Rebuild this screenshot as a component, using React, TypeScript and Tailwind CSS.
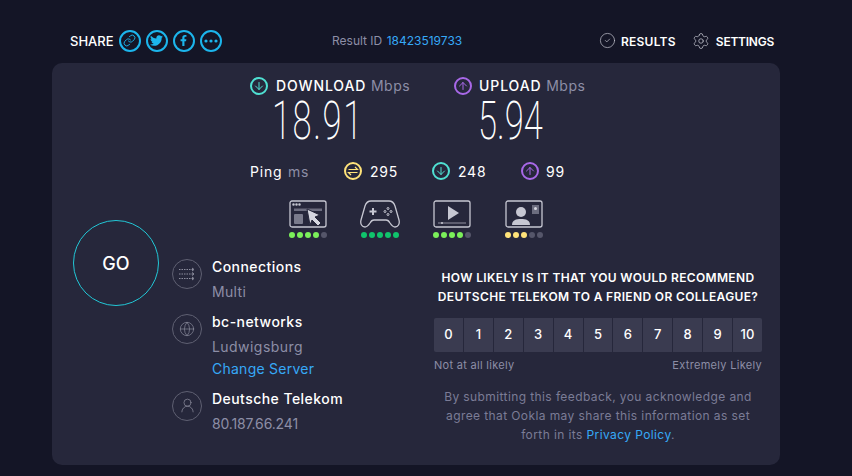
import React from "react";
import { ArrowDown, ArrowUp, CircleCheck, Globe, Link, Settings, UserRound } from "lucide-react";
import { FaFacebookF, FaTwitter } from "react-icons/fa";

function ShareButton({ children }: { children: React.ReactNode }) {
  return (
    <span className="flex h-[22px] w-[22px] items-center justify-center rounded-full border-2 border-[#1cb5ec] text-[#1cb5ec]">
      {children}
    </span>
  );
}

function SpeedDirection({ up }: { up?: boolean }) {
  const Arrow = up ? ArrowUp : ArrowDown;
  return (
    <span
      className={`flex h-[18px] w-[18px] shrink-0 items-center justify-center rounded-full border-2 ${
        up ? "border-[#a868e8] text-[#a868e8]" : "border-[#4fe0d2] text-[#4fe0d2]"
      }`}
    >
      <Arrow size={12} strokeWidth={2} />
    </span>
  );
}

function Dots({ colors }: { colors: string[] }) {
  return (
    <div className="mt-[4px] flex justify-center gap-[2.5px]">
      {colors.map((c, i) => (
        <span key={i} className="h-[5.5px] w-[5.5px] rounded-full" style={{ backgroundColor: c }} />
      ))}
    </div>
  );
}

const LIME = "#7bf05a";
const GREEN = "#10c46c";
const YELLOW = "#ffe37a";
const OFF = "#55566a";

function ServerRow({ icon, title, children }: { icon: React.ReactNode; title: string; children: React.ReactNode }) {
  return (
    <div className="flex gap-[10px]">
      <span className="mt-[1px] flex h-[30px] w-[30px] shrink-0 items-center justify-center rounded-full border border-[#5f6072] text-[#8d8e9f]">
        {icon}
      </span>
      <div>
        <div className="text-[14px] leading-[18px] font-medium tracking-[0.45px] whitespace-nowrap text-white">{title}</div>
        {children}
      </div>
    </div>
  );
}

export default function App() {
  return (
    <div className="h-[476px] w-[852px] overflow-hidden bg-[#141526] px-[52px] font-['Inter',sans-serif]">
      {/* top bar */}
      <header className="flex h-[63px] items-center pt-[18px] pr-[26px] pl-[18px]">
        <div className="flex w-[262px] items-center gap-[5px]">
          <span className="mt-[2px] text-[13px] font-medium text-white">SHARE</span>
          <ShareButton><Link size={13} strokeWidth={1.75} /></ShareButton>
          <ShareButton><FaTwitter size={13} /></ShareButton>
          <ShareButton><FaFacebookF size={11} /></ShareButton>
          <ShareButton>
            <svg width="14" height="4" viewBox="0 0 14 4" fill="currentColor">
              <circle cx="2" cy="2" r="1.6" /><circle cx="7" cy="2" r="1.6" /><circle cx="12" cy="2" r="1.6" />
            </svg>
          </ShareButton>
        </div>
        <div className="mt-[1px] text-[12px] text-[#8d8ea6]">
          Result ID <span className="ml-[1px] text-[#36a9f7]">18423519733</span>
        </div>
        <div className="flex flex-1 items-center justify-end text-[12px] font-semibold text-white">
          <CircleCheck size={17} strokeWidth={1} className="mr-[5px] text-[#c3c4cf]" />
          <span className="mt-[2px] tracking-[0.25px]">RESULTS</span>
          <Settings size={18} strokeWidth={1} className="mr-[6px] ml-[16px] text-[#c3c4cf]" />
          <span className="mt-[2px] tracking-[-0.25px]">SETTINGS</span>
        </div>
      </header>

      <main className="h-[402px] w-[728px] rounded-[10px] bg-[#26273b]">
        {/* speeds */}
        <div className="flex pt-[14px] pl-[198px]">
          <div className="w-[204px]">
            <div className="flex items-center gap-[8px] text-[14px] leading-[18px] whitespace-nowrap">
              <SpeedDirection />
              <span className="font-medium tracking-[0.9px] text-white">DOWNLOAD <span className="font-normal tracking-[0.5px] text-[#8d8ea6]">Mbps</span></span>
            </div>
            <div className="mt-[2px] h-[48px] origin-left translate-x-[22px] scale-x-[0.64] font-['Roboto',sans-serif] text-[54px] leading-[48px] font-extralight tracking-[2.5px] whitespace-nowrap text-white">18.91</div>
          </div>
          <div className="w-[136px]">
            <div className="flex items-center gap-[7px] text-[14px] leading-[18px] whitespace-nowrap">
              <SpeedDirection up />
              <span className="font-medium tracking-[0.9px] text-white">UPLOAD <span className="font-normal tracking-[0.5px] text-[#8d8ea6]">Mbps</span></span>
            </div>
            <div className="mt-[2px] h-[48px] origin-left translate-x-[24px] scale-x-[0.64] font-['Roboto',sans-serif] text-[54px] leading-[48px] font-extralight whitespace-nowrap text-white">5.94</div>
          </div>
        </div>

        {/* ping */}
        <div className="mt-[17px] flex h-[18px] items-center pl-[198px] text-[14px] tracking-[0.8px]">
          <span className="w-[38px] text-white">Ping</span>
          <span className="w-[56px] text-[#8d8ea6]">ms</span>
          <span className="flex h-[18px] w-[18px] items-center justify-center rounded-full border-2 border-[#ffe37a] text-[#ffe37a]">
            <svg width="12" height="12" viewBox="0 0 12 12" fill="none" stroke="currentColor" strokeWidth="1.2">
              <path d="M1.5 4.5h9L8 2M10.500 7.500h-9L4 10" />
            </svg>
          </span>
          <span className="ml-[8px] w-[62px] text-white">295</span>
          <SpeedDirection />
          <span className="ml-[8px] w-[63px] text-white">248</span>
          <SpeedDirection up />
          <span className="ml-[7px] text-white">99</span>
        </div>

        {/* quality icons */}
        <div className="mt-[20px] flex pl-[237px] text-[#c6c7d2]">
          <div className="w-[71px]">
            <svg width="38" height="28" viewBox="0 0 38 28" fill="none" stroke="currentColor" strokeWidth="1.3">
              <rect x="1" y="1" width="36" height="26" rx="2" />
              <circle cx="4.500" cy="4.500" r=".6" fill="currentColor" /><circle cx="7.500" cy="4.500" r=".6" fill="currentColor" /><circle cx="10.500" cy="4.500" r=".6" fill="currentColor" />
              <rect x="5" y="8.500" width="28" height="2.500" fill="#6c6d7f" stroke="none" />
              <rect x="5" y="14" width="9" height="10" rx="1" fill="#7a7b8c" stroke="none" />
              <path d="M18 9l13 6-5 2 6 6-3 3-6-6-2 5z" fill="#d6d7e0" stroke="#26273b" strokeWidth="1" />
            </svg>
            <div className="w-[38px]"><Dots colors={[LIME, LIME, LIME, LIME, OFF]} /></div>
          </div>
          <div className="w-[73px]">
            <svg width="40" height="28" viewBox="0 0 40 28" fill="none" stroke="currentColor" strokeWidth="1.3">
              <path d="M11 1h18c3 0 5 2 6 5l4 14c1 4-1 7-4 7-2 0-3-1-5-4-1-2-2-3-4-3H14c-2 0-3 1-4 3-2 3-3 4-5 4-3 0-5-3-4-7L5 6c1-3 3-5 6-5z" />
              <path d="M13 8v7M9.500 11.500h7" strokeWidth="2" />
              <circle cx="28" cy="8.500" r="1" strokeWidth="1" /><circle cx="28" cy="14.500" r="1" strokeWidth="1" /><circle cx="25" cy="11.500" r="1" strokeWidth="1" /><circle cx="31" cy="11.500" r="1" strokeWidth="1" />
            </svg>
            <div className="w-[40px]"><Dots colors={[GREEN, GREEN, GREEN, GREEN, GREEN]} /></div>
          </div>
          <div className="w-[72px]">
            <svg width="38" height="28" viewBox="0 0 38 28" fill="none" stroke="currentColor" strokeWidth="1.3">
              <rect x="1" y="1" width="36" height="26" rx="2" />
              <path d="M15 6l11 7-11 7z" fill="currentColor" stroke="none" />
              <path d="M5 23h28" stroke="#7a7b8c" />
              <circle cx="9" cy="23" r="1" fill="currentColor" stroke="none" />
            </svg>
            <div className="w-[38px]"><Dots colors={[LIME, LIME, LIME, LIME, OFF]} /></div>
          </div>
          <div className="w-[38px]">
            <svg width="38" height="28" viewBox="0 0 38 28" fill="none" stroke="currentColor" strokeWidth="1.3">
              <rect x="1" y="1" width="36" height="26" rx="2" />
              <circle cx="16" cy="12" r="5" fill="currentColor" stroke="none" />
              <path d="M7 25c0-5 4-6 9-6s9 1 9 6z" fill="currentColor" stroke="none" />
              <rect x="27" y="5" width="7" height="9" fill="#6c6d7f" stroke="none" />
              <circle cx="30.500" cy="8.500" r="1.500" fill="#d6d7e0" stroke="none" />
            </svg>
            <Dots colors={[YELLOW, YELLOW, YELLOW, OFF, OFF]} />
          </div>
        </div>

        {/* go, server info and survey */}
        <div className="flex">
          <div className="-mt-[18px] ml-[21px] flex h-[86px] w-[86px] shrink-0 items-center justify-center rounded-full border border-[#22c7d6] pt-[1px] text-[18px] font-medium text-white">
            GO
          </div>
          <div className="mt-[20px] ml-[13px] w-[262px] shrink-0">
            <ServerRow
              title="Connections"
              icon={
                <svg width="16" height="14" viewBox="0 0 16 14" fill="none" stroke="currentColor" strokeWidth="1" strokeDasharray="1.500 1">
                  <path d="M0 2.500h15M0 7h15M0 11.500h15" />
                  <path d="M13 1l2 1.500-2 1.500M13 5.500L15 7l-2 1.500M13 10l2 1.500-2 1.500" strokeDasharray="none" />
                </svg>
              }
            >
              <div className="mt-[7px] text-[14px] leading-[18px] tracking-[0.35px] text-[#8d8ea6]">Multi</div>
            </ServerRow>
            <div className="mt-[12px]">
              <ServerRow title="bc-networks" icon={<Globe size={16} strokeWidth={1} />}>
                <div className="mt-[7px] text-[14px] leading-[18px] tracking-[0.45px] text-[#8d8ea6]">Ludwigsburg</div>
                <div className="mt-[4px] text-[14px] leading-[18px] tracking-[0.25px] text-[#36a9f7]">Change Server</div>
              </ServerRow>
            </div>
            <div className="mt-[12px]">
              <ServerRow title="Deutsche Telekom" icon={<UserRound size={17} strokeWidth={1} />}>
                <div className="mt-[7px] text-[14px] leading-[18px] tracking-[-0.15px] text-[#8d8ea6]">80.187.66.241</div>
              </ServerRow>
            </div>
          </div>

          <div className="mt-[30px] w-[328px] shrink-0">
            <div className="text-center text-[12px] leading-[19px] font-semibold tracking-[0.35px] whitespace-nowrap text-white">
              HOW LIKELY IS IT THAT YOU WOULD RECOMMEND
              <br />
              DEUTSCHE TELEKOM TO A FRIEND OR COLLEAGUE?
            </div>
            <div className="mt-[12px] flex gap-[1px]">
              {[0, 1, 2, 3, 4, 5, 6, 7, 8, 9, 10].map((n) => (
                <span key={n} className="flex h-[34px] flex-1 items-center justify-center bg-[#3a3b50] text-[13px] font-medium text-white first:rounded-l-[2px] last:rounded-r-[2px]">
                  {n}
                </span>
              ))}
            </div>
            <div className="mt-[5px] flex justify-between text-[11px] leading-[16px] tracking-[0.3px] text-[#8d8ea6]">
              <span>Not at all likely</span>
              <span>Extremely Likely</span>
            </div>
            <p className="mt-[14px] text-center text-[12px] leading-[19px] tracking-[0.4px] whitespace-nowrap text-[#7b7c96]">
              By submitting this feedback, you acknowledge and
              <br />
              agree that Ookla may share this information as set
              <br />
              forth in its <span className="text-[#36a9f7]">Privacy Policy</span>.
            </p>
          </div>
        </div>
      </main>
    </div>
  );
}
